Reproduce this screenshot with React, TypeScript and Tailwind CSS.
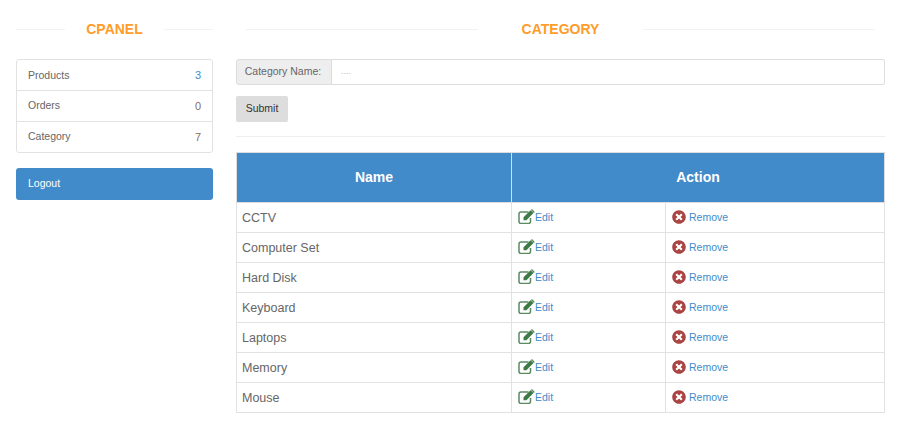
import { FaTimesCircle } from 'react-icons/fa';

const stats = [
  { name: 'Products', count: 3, color: 'text-[#428bca]' },
  { name: 'Orders', count: 0, color: 'text-[#8a6d5b]' },
  { name: 'Category', count: 7, color: 'text-[#8a6d5b]' },
];

const categories = ['CCTV', 'Computer Set', 'Hard Disk', 'Keyboard', 'Laptops', 'Memory', 'Mouse'];

function Heading({ title, gap }: { title: string; gap: string }) {
  return (
    <div className={`flex h-[18px] items-center ${gap}`}>
      <div className="h-px flex-1 bg-[#f2f2f2]" />
      <h2 className="text-[14px] font-bold leading-[18px] text-[#ff9c2a]">{title}</h2>
      <div className="h-px flex-1 bg-[#f2f2f2]" />
    </div>
  );
}

// square-and-pencil icon, the outlined kind with a solid pencil
function EditIcon() {
  return (
    <svg viewBox="0 0 17 15" className="mb-[3px] h-[15px] w-[17px] shrink-0">
      <path d="M10.5 3H3a2 2 0 0 0-2 2v7.5a2 2 0 0 0 2 2h7.5a2 2 0 0 0 2-2V9" fill="none" stroke="#5b8a63" strokeWidth="1.5" />
      <path d="M5.5 8.2 12.6 1.2l2.9 2.9-7.1 7.1H5.5z" fill="#3f7a46" />
      <path d="M13.4.6a.8.8 0 0 1 1.1 0l1.9 1.9a.8.8 0 0 1 0 1.1l-.5.5-3-3z" fill="#5b8a63" />
    </svg>
  );
}

export default function App() {
  return (
    <div className="flex h-[422px] w-[900px] gap-[23px] overflow-hidden bg-white pl-4 pt-5 font-['Liberation_Sans',sans-serif] text-[10.5px] text-[#666]">
      {/* Sidebar */}
      <aside className="w-[197px] shrink-0">
        <Heading title="CPANEL" gap="gap-[21px]" />
        <ul className="mt-[21px] rounded-[3px] border border-[#e2e2e2]">
          {stats.map((s) => (
            <li key={s.name} className="flex h-[31px] items-center justify-between border-b border-[#e2e2e2] px-[11px] first:pt-px last:h-[30px] last:border-b-0">
              <span>{s.name}</span>
              <span className={`text-[11px] ${s.color}`}>{s.count}</span>
            </li>
          ))}
        </ul>
        <button className="mt-[15px] flex h-[32px] w-full items-center rounded-[3px] bg-[#428bca] px-3 font-normal text-white">Logout</button>
      </aside>

      {/* Main */}
      <main className="w-[649px] shrink-0">
        <div className="px-[10px]">
          <Heading title="CATEGORY" gap="gap-[44px]" />
        </div>
        <div className="mt-[21px] flex h-[26px]">
          <span className="flex w-[96px] items-center justify-center rounded-l-[3px] border border-[#ddd] bg-[#eee] pb-px pr-[2px]">Category Name:</span>
          <input placeholder="...." className="flex-1 rounded-r-[3px] border border-l-0 border-[#ddd] px-[9px] text-[9px] outline-none placeholder:text-[#bbb]" />
        </div>
        <button className="mt-[11px] flex h-[26px] w-[52px] items-center justify-center rounded-[2px] bg-[#ddd] text-[#333]">Submit</button>
        <div className="mt-[14px] h-px bg-[#eee]" />
        <table className="mt-[15px] w-full table-fixed border-collapse text-[12.5px]">
          <colgroup>
            <col className="w-[275px]" />
            <col className="w-[154px]" />
            <col />
          </colgroup>
          <thead>
            <tr className="h-[50px] bg-[#428bca] text-[14px] font-bold text-white">
              <th className="border border-[#ddd]">Name</th>
              <th colSpan={2} className="border border-[#ddd]">Action</th>
            </tr>
          </thead>
          <tbody>
            {categories.map((c) => (
              <tr key={c} className="h-[30px]">
                <td className="border border-[#e2e2e2] px-[5px] pt-px">{c}</td>
                <td className="border border-[#e2e2e2] px-[6px] pt-px text-[10.5px]">
                  <a className="flex items-center text-[#428bca]">
                    <EditIcon />
                    Edit
                  </a>
                </td>
                <td className="border border-[#e2e2e2] px-[6px] pt-px text-[10.5px]">
                  <a className="flex items-center gap-[3px] text-[#428bca]">
                    <FaTimesCircle className="mb-[2px] size-[14px] text-[#a94442]" />
                    Remove
                  </a>
                </td>
              </tr>
            ))}
          </tbody>
        </table>
      </main>
    </div>
  );
}
